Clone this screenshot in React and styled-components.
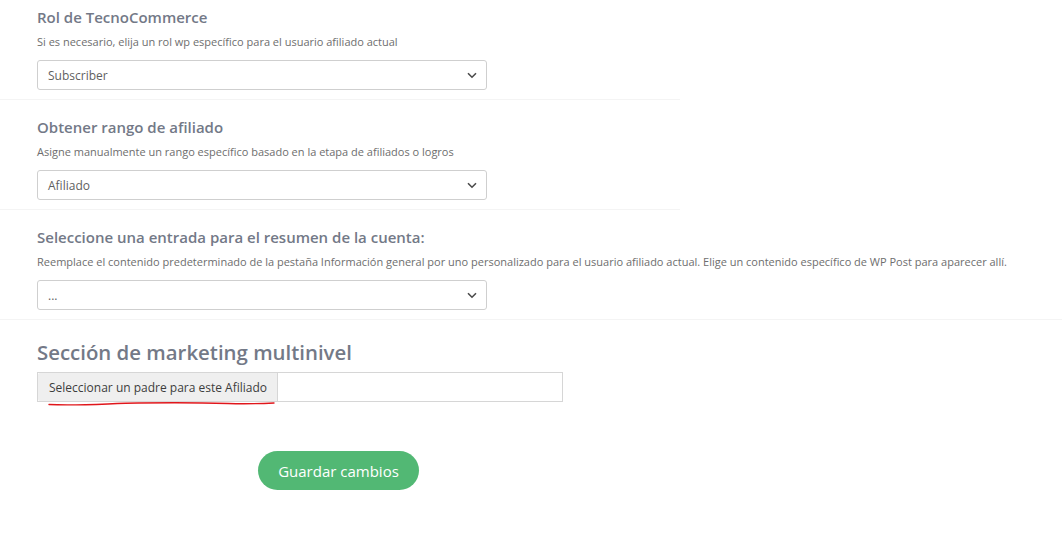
import styled, { createGlobalStyle } from "styled-components";

const GlobalStyle = createGlobalStyle`
  body {
    margin: 0;
    background: #fff;
    font-family: "Open Sans", "Noto Sans", sans-serif;
  }
`;

const Page = styled.div`
  display: flex;
  flex-direction: column;
  align-items: flex-start;
  width: 1062px;
`;

const Section = styled.div`
  width: ${(p) => (p.$full ? "100%" : "680px")};
  box-sizing: border-box;
  padding: 17px 0 9px 37px;
  border-bottom: 1px solid #f4f4f4;

  &:first-of-type {
    padding-top: 7px;
  }
`;

const Title = styled.h3`
  margin: 0 0 7px;
  font-size: 15px;
  font-weight: 600;
  color: #737987;
  line-height: 20px;
`;

const Hint = styled.p`
  margin: 0 0 10px;
  font-size: 11px;
  color: #6e6e6e;
  line-height: 16px;
  white-space: nowrap;
`;

const SelectBox = styled.div`
  display: flex;
  align-items: center;
  justify-content: space-between;
  width: 450px;
  height: 30px;
  box-sizing: border-box;
  padding: 0 9px 0 10px;
  border: 1px solid #cfcfcf;
  border-radius: 3px;
  font-size: 12px;
  color: #5f5f5f;
`;

const Multi = styled.div`
  padding: 19px 0 0 37px;
`;

const BigTitle = styled.h2`
  margin: 0 0 7px;
  font-size: 20.4px;
  font-weight: 600;
  color: #737987;
  line-height: 26px;
`;

const InputGroup = styled.div`
  display: flex;
  width: 526px;
  height: 30px;
  box-sizing: border-box;
  border: 1px solid #d6d6d6;
`;

const AddonButton = styled.div`
  position: relative;
  display: flex;
  align-items: center;
  padding: 0 10px 0 11px;
  background: #efefef;
  border-right: 1px solid #d6d6d6;
  border-radius: 2px 0 0 2px;
  font-size: 12px;
  color: #3d3d3d;
`;

const Scribble = styled.svg`
  position: absolute;
  left: 10px;
  bottom: -7px;
`;

const Footer = styled.div`
  padding: 49px 0 0 258px;
`;

const SaveButton = styled.button`
  width: 161px;
  height: 39px;
  border: none;
  border-radius: 20px;
  background: #52b874;
  color: #fff;
  font-family: inherit;
  font-size: 15px;
  cursor: pointer;
`;

const Chevron = () => (
  <svg width="10" height="7" viewBox="0 0 10 7">
    <path d="M1 1.3 5 5.2 9 1.3" fill="none" stroke="#4a4a4a" strokeWidth="1.6" />
  </svg>
);

const fields = [
  {
    title: "Rol de TecnoCommerce",
    hint: "Si es necesario, elija un rol wp específico para el usuario afiliado actual",
    value: "Subscriber",
  },
  {
    title: "Obtener rango de afiliado",
    hint: "Asigne manualmente un rango específico basado en la etapa de afiliados o logros",
    value: "Afiliado",
  },
  {
    title: "Seleccione una entrada para el resumen de la cuenta:",
    hint: "Reemplace el contenido predeterminado de la pestaña Información general por uno personalizado para el usuario afiliado actual. Elige un contenido específico de WP Post para aparecer allí.",
    value: "...",
    full: true,
  },
];

const App = () => {
  return (
    <Page>
      <GlobalStyle />
      {fields.map((f) => (
        <Section key={f.title} $full={f.full}>
          <Title>{f.title}</Title>
          <Hint>{f.hint}</Hint>
          <SelectBox>
            <span>{f.value}</span>
            <Chevron />
          </SelectBox>
        </Section>
      ))}
      <Multi>
        <BigTitle>Sección de marketing multinivel</BigTitle>
        <InputGroup>
          <AddonButton>
            Seleccionar un padre para este Afiliado
            <Scribble width="228" height="8" viewBox="0 0 228 8">
              <path
                d="M1 4.5 C30 6 60 3.5 90 3 C120 2.5 150 2.5 180 3.5 C200 4 215 3.5 226 3"
                fill="none"
                stroke="#e0161b"
                strokeWidth="1.4"
                strokeLinecap="round"
              />
            </Scribble>
          </AddonButton>
        </InputGroup>
      </Multi>
      <Footer>
        <SaveButton>Guardar cambios</SaveButton>
      </Footer>
    </Page>
  );
};

export default App;
